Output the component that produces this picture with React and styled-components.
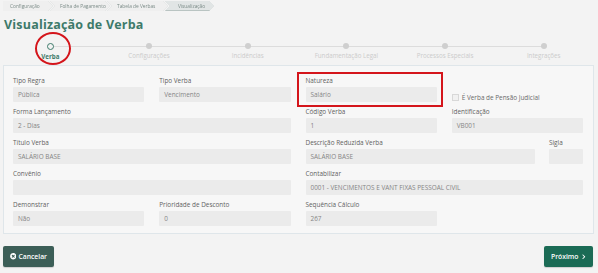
import styled, { createGlobalStyle } from 'styled-components';
import { FaTimesCircle, FaChevronRight } from 'react-icons/fa';

const GlobalStyle = createGlobalStyle`
    html, body {
        margin: 0;
        padding: 0;
        background: #f3f3f3;
        font-family: "Open Sans", "DejaVu Sans", sans-serif;
    }
`

const Page = styled('div')({
    width: 598,
    height: 273,
    boxSizing: 'border-box',
    padding: '1px 4px 0 3px',
    display: 'flex',
    flexDirection: 'column',
})

const Breadcrumb = styled('div')({
    display: 'flex',
    height: 10,
    filter: 'drop-shadow(0 0 0.5px #c9cfce)',
})

const Crumb = styled('div')(({ active, w }) => ({
    height: 10,
    width: w,
    marginLeft: -3,
    paddingLeft: active ? 13 : 10,
    boxSizing: 'border-box',
    display: 'flex',
    alignItems: 'center',
    fontSize: 4.8,
    color: '#7a8a86',
    background: active ? '#e1e5e5' : '#efefef',
    borderBottom: active ? '1px solid #b9c4c2' : 'none',
    clipPath: 'polygon(0 0, calc(100% - 5px) 0, 100% 50%, calc(100% - 5px) 100%, 0 100%, 5px 50%)',
    '&:first-child': {
        marginLeft: 0,
        clipPath: 'polygon(0 0, calc(100% - 5px) 0, 100% 50%, calc(100% - 5px) 100%, 0 100%)',
        paddingLeft: 7,
    },
}))

const Title = styled('h1')({
    margin: '6px 0 0 1px',
    fontSize: 12.5,
    lineHeight: '16px',
    fontWeight: 700,
    color: '#3d7a6a',
    letterSpacing: 0.2,
})

const Stepper = styled('div')({
    display: 'flex',
    margin: '10px 0 0 -2px',
    width: 592,
})

const Step = styled('div')(({ first, last }) => ({
    flex: 1,
    position: 'relative',
    display: 'flex',
    flexDirection: 'column',
    alignItems: 'center',
    '&::before': {
        content: '""',
        position: 'absolute',
        top: 3,
        left: first ? '50%' : 0,
        right: last ? '50%' : 0,
        height: 1,
        background: '#dcdcdc',
    },
}))

const Dot = styled('span')(({ active }) => ({
    position: 'relative',
    zIndex: 1,
    width: active ? 5 : 6,
    height: active ? 5 : 6,
    borderRadius: '50%',
    background: active ? '#f3f3f3' : '#cfcfcf',
    border: active ? '1.2px solid #3d7a6a' : 'none',
}))

const StepLabel = styled('span')(({ active }) => ({
    marginTop: 2,
    fontSize: active ? 6.2 : 6.2,
    lineHeight: '9px',
    fontWeight: active ? 700 : 400,
    color: active ? '#3d7a6a' : '#cbcbcb',
}))

const RedCircle = styled('span')({
    position: 'absolute',
    left: 'calc(50% - 15px)',
    top: -11,
    width: 32,
    height: 29,
    borderRadius: '50%',
    border: '2.5px solid #d4151b',
})

const Panel = styled('div')({
    marginTop: 4,
    background: '#f7f7f7',
    border: '1px solid #dfe6ea',
    padding: '10px 10px 7px 9px',
    display: 'grid',
    gridTemplateColumns: 'repeat(4, 1fr)',
    columnGap: 15,
    rowGap: 5,
})

const Field = styled('div')(({ span, highlight }) => ({
    gridColumn: span ? `span ${span}` : 'auto',
    display: 'flex',
    flexDirection: 'column',
    position: 'relative',
    minWidth: 0,
    '&::after': highlight ? {
        content: '""',
        position: 'absolute',
        left: -9,
        right: -6,
        top: -4,
        bottom: -5,
        border: '2px solid #d4151b',
    } : {},
}))

const SplitField = styled('div')({
    gridColumn: 'span 2',
    display: 'flex',
    columnGap: 14,
})

const Label = styled('label')({
    fontSize: 6.4,
    lineHeight: '10px',
    height: 10,
    color: '#5f5f5f',
    marginBottom: 1,
    whiteSpace: 'nowrap',
})

const Input = styled('div')({
    height: 15,
    background: '#ebebeb',
    borderRadius: 1,
    paddingLeft: 5,
    display: 'flex',
    alignItems: 'center',
    fontSize: 6.4,
    color: '#858585',
    whiteSpace: 'nowrap',
})

const CheckRow = styled('div')({
    display: 'flex',
    alignItems: 'center',
    gap: 3,
    marginTop: 17,
    fontSize: 6.4,
    color: '#6a6a6a',
})

const Box = styled('span')({
    width: 5,
    height: 5,
    border: '1px solid #d8d8d8',
    background: '#f1f1f1',
})

const Footer = styled('div')({
    display: 'flex',
    justifyContent: 'space-between',
    marginTop: 12,
    paddingRight: 1,
})

const Button = styled('button')(({ primary }) => ({
    height: 21,
    width: primary ? 49 : 51,
    border: 'none',
    borderRadius: 2,
    background: primary ? '#1b6b55' : '#3c5e57',
    color: '#fff',
    fontFamily: '"Open Sans", sans-serif',
    fontSize: 6.8,
    fontWeight: 600,
    display: 'flex',
    alignItems: 'center',
    justifyContent: 'center',
    gap: 2,
    padding: 0,
    boxShadow: '0 1px 1px rgba(0,0,0,0.15)',
}))

const steps = ['Verba', 'Configurações', 'Incidências', 'Fundamentação Legal', 'Processos Especiais', 'Integrações']

function TextField({ label, value, span, highlight }) {
    return (
        <Field span={span} highlight={highlight}>
            <Label>{label}</Label>
            <Input>{value}</Input>
        </Field>
    )
}

export default function App() {
    return (
        <Page>
            <GlobalStyle />
            <Breadcrumb>
                <Crumb w={50}>Configuração</Crumb>
                <Crumb w={60}>Folha de Pagamento</Crumb>
                <Crumb w={61}>Tabela de Verbas</Crumb>
                <Crumb active w={49}>Visualização</Crumb>
            </Breadcrumb>
            <Title>Visualização de Verba</Title>
            <Stepper>
                {steps.map((s, i) => (
                    <Step key={s} first={i === 0} last={i === steps.length - 1}>
                        <Dot active={i === 0} />
                        <StepLabel active={i === 0}>{s}</StepLabel>
                        {i === 0 && <RedCircle />}
                    </Step>
                ))}
            </Stepper>
            <Panel>
                <TextField label="Tipo Regra" value="Pública" />
                <TextField label="Tipo Verba" value="Vencimento" />
                <TextField label="Natureza" value="Salário" highlight />
                <Field>
                    <CheckRow><Box />É Verba de Pensão Judicial</CheckRow>
                </Field>

                <TextField label="Forma Lançamento" value="2 - Dias" span={2} />
                <TextField label="Código Verba" value="1" />
                <TextField label="Identificação" value="VB001" />

                <TextField label="Título Verba" value="SALÁRIO BASE" span={2} />
                <SplitField>
                    <Field style={{ flex: 1 }}>
                        <Label>Descrição Reduzida Verba</Label>
                        <Input>SALÁRIO BASE</Input>
                    </Field>
                    <Field style={{ width: 34 }}>
                        <Label>Sigla</Label>
                        <Input />
                    </Field>
                </SplitField>

                <TextField label="Convênio" value="" span={2} />
                <TextField label="Contabilizar" value="0001 - VENCIMENTOS E VANT FIXAS PESSOAL CIVIL" span={2} />

                <TextField label="Demonstrar" value="Não" />
                <TextField label="Prioridade de Desconto" value="0" />
                <TextField label="Sequência Cálculo" value="267" />
            </Panel>
            <Footer>
                <Button><FaTimesCircle size={6.5} /> Cancelar</Button>
                <Button primary>Próximo <FaChevronRight size={5.5} /></Button>
            </Footer>
        </Page>
    )
}
